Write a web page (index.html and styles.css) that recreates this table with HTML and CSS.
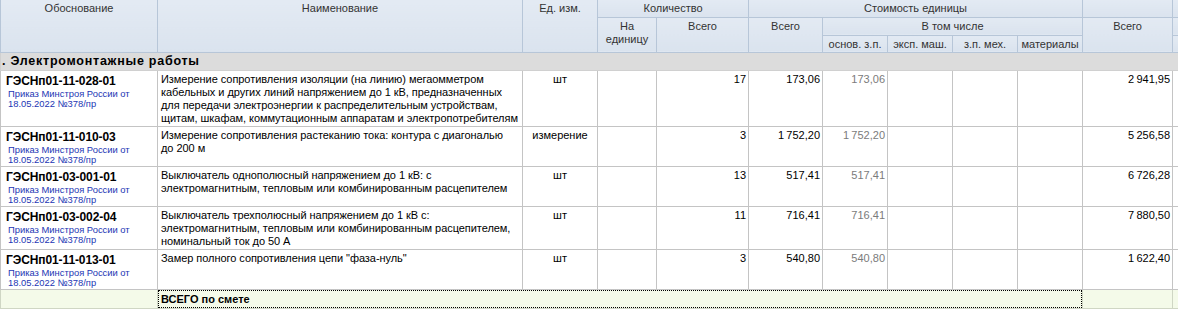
FILE: index.html
```html
<!DOCTYPE html>
<html lang="ru">
<head>
<meta charset="utf-8">
<title>Смета</title>
<link rel="stylesheet" href="styles.css">
</head>
<body>
<div class="grid-wrap">
<table class="grid">
  <colgroup>
    <col class="w-code"><col class="w-name"><col class="w-unit"><col class="w-per"><col class="w-qty">
    <col class="w-cost"><col class="w-sub"><col class="w-sub"><col class="w-sub"><col class="w-sub">
    <col class="w-total"><col class="w-extra">
  </colgroup>
  <thead>
    <tr class="h1">
      <th rowspan="3">Обоснование</th>
      <th rowspan="3">Наименование</th>
      <th rowspan="3">Ед. изм.</th>
      <th colspan="2">Количество</th>
      <th colspan="5">Стоимость единицы</th>
      <th></th>
      <th></th>
    </tr>
    <tr class="h2">
      <th rowspan="2">На<br>единицу</th>
      <th rowspan="2">Всего</th>
      <th rowspan="2">Всего</th>
      <th colspan="4">В том числе</th>
      <th rowspan="2">Всего</th>
      <th></th>
    </tr>
    <tr class="h3">
      <th>основ. з.п.</th>
      <th>эксп. маш.</th>
      <th>з.п. мех.</th>
      <th>материалы</th>
      <th></th>
    </tr>
  </thead>
  <tbody>
    <tr class="section">
      <td colspan="12">. Электромонтажные работы</td>
    </tr>
    <tr class="r4">
      <td class="code"><div class="c">ГЭСНп01-11-028-01</div><div class="ref">Приказ Минстроя России от<br>18.05.2022 №378/пр</div></td>
      <td class="name">Измерение сопротивления изоляции (на линию) мегаомметром кабельных и других линий напряжением до 1 кВ, предназначенных для передачи электроэнергии к распределительным устройствам, щитам, шкафам, коммутационным аппаратам и электропотребителям</td>
      <td class="unit">шт</td>
      <td></td>
      <td class="num">17</td>
      <td class="num">173,06</td>
      <td class="num gray">173,06</td>
      <td></td><td></td><td></td>
      <td class="num">2&#8201;941,95</td>
      <td></td>
    </tr>
    <tr class="r2">
      <td class="code"><div class="c">ГЭСНп01-11-010-03</div><div class="ref">Приказ Минстроя России от<br>18.05.2022 №378/пр</div></td>
      <td class="name">Измерение сопротивления растеканию тока: контура с диагональю<br>до 200 м</td>
      <td class="unit">измерение</td>
      <td></td>
      <td class="num">3</td>
      <td class="num">1&#8201;752,20</td>
      <td class="num gray">1&#8201;752,20</td>
      <td></td><td></td><td></td>
      <td class="num">5&#8201;256,58</td>
      <td></td>
    </tr>
    <tr class="r2">
      <td class="code"><div class="c">ГЭСНп01-03-001-01</div><div class="ref">Приказ Минстроя России от<br>18.05.2022 №378/пр</div></td>
      <td class="name">Выключатель однополюсный напряжением до 1 кВ: с электромагнитным, тепловым или комбинированным расцепителем</td>
      <td class="unit">шт</td>
      <td></td>
      <td class="num">13</td>
      <td class="num">517,41</td>
      <td class="num gray">517,41</td>
      <td></td><td></td><td></td>
      <td class="num">6&#8201;726,28</td>
      <td></td>
    </tr>
    <tr class="r3">
      <td class="code"><div class="c">ГЭСНп01-03-002-04</div><div class="ref">Приказ Минстроя России от<br>18.05.2022 №378/пр</div></td>
      <td class="name">Выключатель трехполюсный напряжением до 1 кВ с: электромагнитным, тепловым или комбинированным расцепителем, номинальный ток до 50 А</td>
      <td class="unit">шт</td>
      <td></td>
      <td class="num">11</td>
      <td class="num">716,41</td>
      <td class="num gray">716,41</td>
      <td></td><td></td><td></td>
      <td class="num">7&#8201;880,50</td>
      <td></td>
    </tr>
    <tr class="r5">
      <td class="code"><div class="c">ГЭСНп01-11-013-01</div><div class="ref">Приказ Минстроя России от<br>18.05.2022 №378/пр</div></td>
      <td class="name">Замер полного сопротивления цепи "фаза-нуль"</td>
      <td class="unit">шт</td>
      <td></td>
      <td class="num">3</td>
      <td class="num">540,80</td>
      <td class="num gray">540,80</td>
      <td></td><td></td><td></td>
      <td class="num">1&#8201;622,40</td>
      <td></td>
    </tr>
    <tr class="total">
      <td></td>
      <td colspan="9" class="total-label"><span>ВСЕГО по смете</span></td>
      <td></td>
      <td></td>
    </tr>
  </tbody>
</table>
</div>
</body>
</html>
```

FILE: styles.css
```css
html, body {
  margin: 0;
  padding: 0;
  background: #ffffff;
}

.grid-wrap {
  width: 1178px;
  height: 309px;
  overflow: hidden;
}

.grid {
  table-layout: fixed;
  border-collapse: collapse;
  width: 1213px;
  font-family: "Liberation Sans", Arial, sans-serif;
  font-size: 11px;
  color: #000;
}

.w-code { width: 157px; }
.w-name { width: 365px; }
.w-unit { width: 75px; }
.w-per { width: 59px; }
.w-qty { width: 92px; }
.w-cost { width: 74px; }
.w-sub { width: 65px; }
.w-total { width: 90px; }
.w-extra { width: 41px; }

.grid th {
  background: linear-gradient(#e3eaf3, #dae3ee);
  border: 1px solid #b7c6d8;
  border-top: none;
  font-weight: normal;
  color: #333;
  text-align: center;
  vertical-align: top;
  padding: 2px 2px 0;
  line-height: 13px;
  overflow: hidden;
  white-space: nowrap;
}

.h1 { height: 17px; }
.h2 { height: 18px; }
.h3 { height: 17px; }

.grid td {
  border: 1px solid #c4c4c4;
  vertical-align: top;
  padding: 2px 3px 0;
  line-height: 13px;
  overflow: hidden;
}

.grid td.name {
  padding: 2px 0 0 3px;
  letter-spacing: -0.05px;
}

.section td {
  background: #dcdcdc;
  font-weight: bold;
  font-size: 12.5px;
  letter-spacing: 0.75px;
  padding: 2px 1px 0;
  height: 15px;
  border-color: #d0d0d0;
}

.r4 { height: 56px; }
.r2 { height: 40px; }
.r3 { height: 43px; }
.r5 { height: 39px; }

.grid td.code {
  padding: 3px 3px 0 5px;
  white-space: nowrap;
}

.code .c {
  font-weight: bold;
  font-size: 12px;
  line-height: 15px;
  letter-spacing: -0.1px;
}

.code .ref {
  color: #2336b4;
  font-size: 9.4px;
  line-height: 10.5px;
  padding-left: 2px;
}

.unit { text-align: center; }

.grid td.num {
  text-align: right;
  padding-right: 2px;
  white-space: nowrap;
}

.gray { color: #7b7b7b; }

.total td {
  background: #f4fae9;
  height: 16px;
  border-color: #cfd6c4;
}

.grid td.total-label {
  padding: 0;
  font-weight: bold;
}

.total-label span {
  display: block;
  border: 1px dotted #000;
  padding: 1px 2px 1px 2px;
  line-height: 14px;
}
```
